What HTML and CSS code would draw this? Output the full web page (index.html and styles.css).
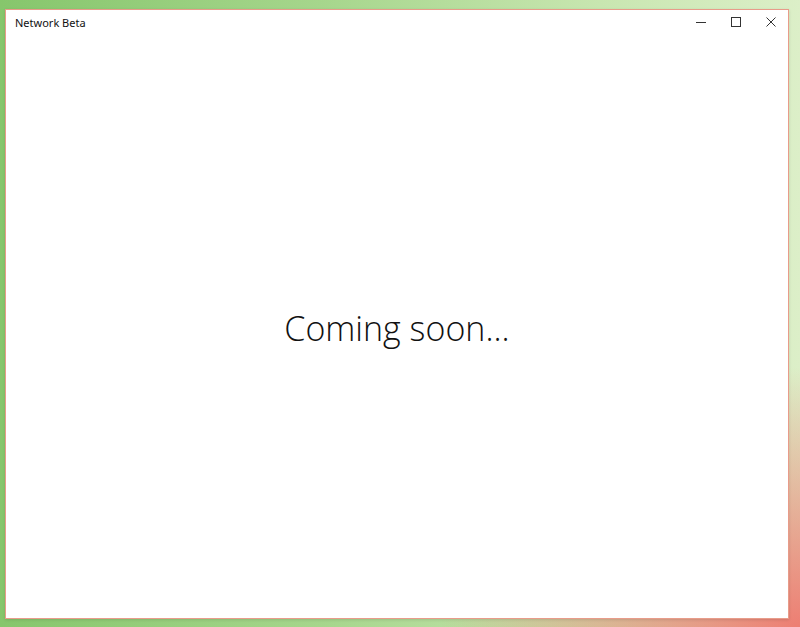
FILE: index.html
```html
<!DOCTYPE html>
<html lang="en">
<head>
    <meta charset="UTF-8">
    <title>Network Beta</title>
    <link rel="stylesheet" href="styles.css">
</head>
<body>
    <div class="desktop">
        <div class="window">
            <div class="titlebar">
                <span class="title">Network Beta</span>
                <div class="caption">
                    <span class="cap-btn">
                        <svg width="10" height="10" viewBox="0 0 10 10"><path d="M0 5.5h10" stroke="#333" stroke-width="1"/></svg>
                    </span>
                    <span class="cap-btn">
                        <svg width="10" height="10" viewBox="0 0 10 10"><rect x="0.5" y="0.5" width="9" height="9" fill="none" stroke="#333" stroke-width="1"/></svg>
                    </span>
                    <span class="cap-btn">
                        <svg width="10" height="10" viewBox="0 0 10 10"><path d="M0.5 0.5l9 9M9.5 0.5l-9 9" stroke="#333" stroke-width="1"/></svg>
                    </span>
                </div>
            </div>
            <div class="content">
                <p class="soon">Coming soon...</p>
            </div>
        </div>
    </div>
</body>
</html>
```

FILE: styles.css
```css
html, body {
    margin: 0;
    height: 100%;
}
body {
    font-family: "Open Sans", "Noto Sans", sans-serif;
    background:
        radial-gradient(ellipse 360px 260px at 100% 100%, rgba(238, 120, 110, 0.95), rgba(238, 120, 110, 0) 100%),
        linear-gradient(90deg, #86c66c 0%, #a6d68c 40%, #c8e6b0 75%, #dcefc8 100%);
}
.desktop {
    padding: 9px 0 0 5px;
}
.window {
    width: 782px;
    height: 608px;
    background: #fff;
    border: 1px solid #e89c8a;
    box-shadow: 0 1px 3px rgba(0, 0, 0, 0.12);
    display: flex;
    flex-direction: column;
}
.titlebar {
    height: 22px;
    display: flex;
    align-items: center;
    justify-content: space-between;
    padding-top: 1px;
}
.title {
    font-size: 11px;
    color: #111;
    padding-left: 9px;
    font-family: "Noto Sans", "Open Sans", sans-serif;
}
.caption {
    display: flex;
    padding-right: 0;
}
.cap-btn {
    width: 35px;
    height: 22px;
    display: flex;
    align-items: center;
    justify-content: center;
}
.content {
    flex: 1;
    display: flex;
    align-items: center;
    justify-content: center;
    padding-top: 4px;
}
.soon {
    margin: 0;
    font-size: 34px;
    font-weight: 300;
    color: #111;
}
```
